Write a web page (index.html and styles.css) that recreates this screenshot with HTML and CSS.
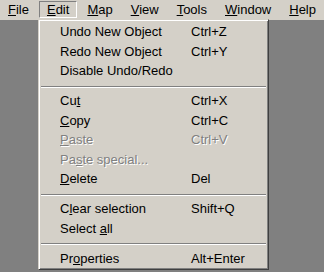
FILE: index.html
```html
<!DOCTYPE html>
<html lang="en">
<head>
    <meta charset="UTF-8">
    <meta name="viewport" content="width=device-width, initial-scale=1.0">
    <title>Edit menu</title>
    <link rel="stylesheet" href="styles.css">
</head>
<body>
    <div class="menubar">
        <span class="menu-title"><u>F</u>ile</span>
        <span class="menu-title open"><u>E</u>dit</span>
        <span class="menu-title"><u>M</u>ap</span>
        <span class="menu-title"><u>V</u>iew</span>
        <span class="menu-title"><u>T</u>ools</span>
        <span class="menu-title"><u>W</u>indow</span>
        <span class="menu-title"><u>H</u>elp</span>
    </div>

    <div class="dropdown">
        <div class="item"><span>Undo New Object</span><span>Ctrl+Z</span></div>
        <div class="item"><span>Redo New Object</span><span>Ctrl+Y</span></div>
        <div class="item"><span>Disable Undo/Redo</span><span></span></div>
        <div class="separator"></div>
        <div class="item"><span>Cu<u>t</u></span><span>Ctrl+X</span></div>
        <div class="item"><span><u>C</u>opy</span><span>Ctrl+C</span></div>
        <div class="item disabled"><span><u>P</u>aste</span><span>Ctrl+V</span></div>
        <div class="item disabled"><span>Pa<u>s</u>te special...</span><span></span></div>
        <div class="item"><span><u>D</u>elete</span><span>Del</span></div>
        <div class="separator"></div>
        <div class="item"><span>C<u>l</u>ear selection</span><span>Shift+Q</span></div>
        <div class="item"><span>Select <u>a</u>ll</span><span></span></div>
        <div class="separator"></div>
        <div class="item"><span>Pr<u>o</u>perties</span><span>Alt+Enter</span></div>
    </div>
</body>
</html>
```

FILE: styles.css
```css
html, body {
    margin: 0;
    height: 100%;
    background: #808080;
}
body {
    font-family: "Liberation Sans", Arial, sans-serif;
    font-size: 13px;
    color: black;
}
.menubar {
    display: flex;
    height: 20px;
    background: #d4d0c8;
}
.menu-title {
    margin-top: 1px;
    margin-right: 2px;
    height: 15px;
    line-height: 15px;
    padding: 0 7px;
    border: 1px solid transparent;
    white-space: nowrap;
}
.menu-title.open {
    border-color: #808080 #ffffff #ffffff #808080;
}
.dropdown {
    position: absolute;
    left: 38px;
    top: 19px;
    width: 226px;
    padding: 2px 1px 1px 2px;
    background: #d4d0c8;
    border: 1px solid;
    border-color: #d4d0c8 #404040 #404040 #d4d0c8;
    box-shadow: inset 1px 1px #ffffff, inset -1px -1px #808080;
}
.item {
    display: grid;
    grid-template-columns: 131px auto;
    height: 19.5px;
    line-height: 19.5px;
    padding-left: 19px;
    white-space: nowrap;
}
.item.disabled {
    color: #808080;
    text-shadow: 1px 1px 0 #ffffff;
}
.separator {
    box-sizing: border-box;
    height: 10.5px;
    padding: 5px 1px 0 0;
}
.separator::before {
    content: "";
    display: block;
    border-top: 1px solid #808080;
    border-bottom: 1px solid #ffffff;
}
```
